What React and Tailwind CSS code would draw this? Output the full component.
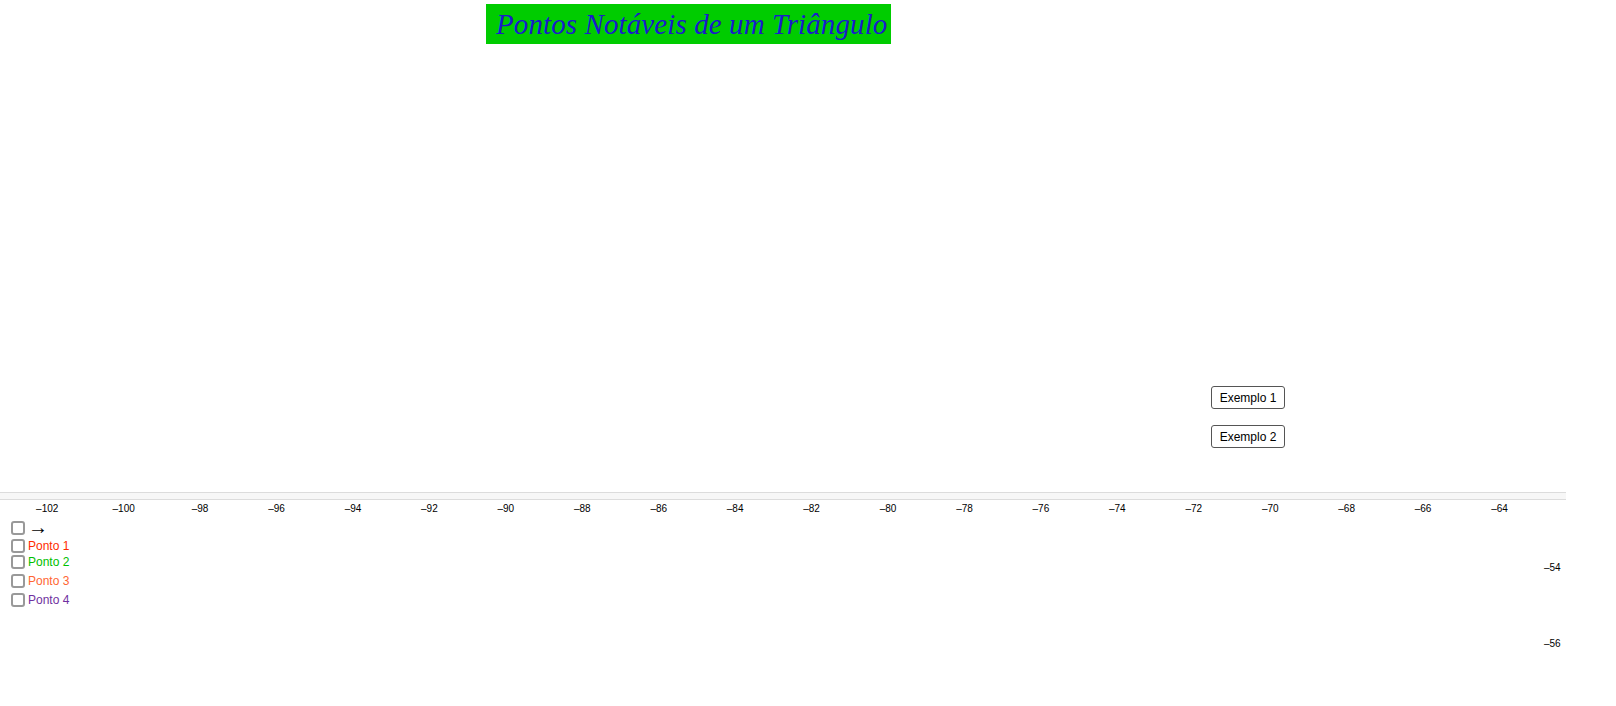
import React from "react";

const xTicks = [-102, -100, -98, -96, -94, -92, -90, -88, -86, -84, -82, -80, -78, -76, -74, -72, -70, -68, -66, -64];

const pontos = [
  { label: "→", color: "text-black", mt: "mt-0", arrow: true },
  { label: "Ponto 1", color: "text-[#ff2a00]", mt: "mt-[4px]" },
  { label: "Ponto 2", color: "text-[#00c000]", mt: "mt-[2px]" },
  { label: "Ponto 3", color: "text-[#ff6633]", mt: "mt-[5px]" },
  { label: "Ponto 4", color: "text-[#7030a0]", mt: "mt-[5px]" },
];

const Checkbox = () => (
  <span className="inline-block w-[14px] h-[14px] rounded-[3px] border-2 border-[#999] bg-white shrink-0" />
);

const App = () => {
  return (
    <div className="w-[1616px] h-[706px] bg-white overflow-hidden font-['Liberation_Sans',Arial,sans-serif]">
      {/* top canvas */}
      <div className="h-[492px] w-[1566px] flex flex-col">
        <div className="ml-[486px] mt-[4px] w-[405px] h-[40px] bg-[#00cc00] flex items-center pl-[10px]">
          <span className="font-['Liberation_Serif','DejaVu_Serif',serif] italic text-[#1a1acc] text-[29px] leading-none whitespace-nowrap tracking-[0.1px]">
            Pontos Notáveis de um Triângulo
          </span>
        </div>
        <button className="ml-[1211px] mt-[342px] w-[74px] h-[23px] rounded-[3px] border border-[#555] bg-white text-[12px] text-black leading-none">
          Exemplo 1
        </button>
        <button className="ml-[1211px] mt-[16px] w-[74px] h-[23px] rounded-[3px] border border-[#555] bg-white text-[12px] text-black leading-none">
          Exemplo 2
        </button>
      </div>

      {/* divider */}
      <div className="w-[1566px] h-[8px] border-y border-[#dcdcdc] bg-[#f7f7f7]" />

      {/* graphics view */}
      <div className="relative w-[1566px] h-[206px]">
        <div className="flex pl-[9px] pt-[4px] text-[10px] text-black leading-none">
          {xTicks.map((t) => (
            <span key={t} className="w-[76.45px] text-center shrink-0">
              {"\u2013" + Math.abs(t)}
            </span>
          ))}
        </div>

        <div className="flex flex-col pl-[11px] pt-[7px]">
          {pontos.map((p) => (
            <div key={p.label} className={`flex items-center gap-[3px] h-[14px] ${p.mt}`}>
              <Checkbox />
              <span className={`${p.color} ${p.arrow ? "text-[20px] -mt-[3px]" : "text-[12px]"} leading-none`}>
                {p.label}
              </span>
            </div>
          ))}
        </div>

        <span className="absolute left-[1544px] top-[63px] text-[10px] leading-none text-black">–54</span>
        <span className="absolute left-[1544px] top-[139px] text-[10px] leading-none text-black">–56</span>
      </div>
    </div>
  );
};

export default App;
